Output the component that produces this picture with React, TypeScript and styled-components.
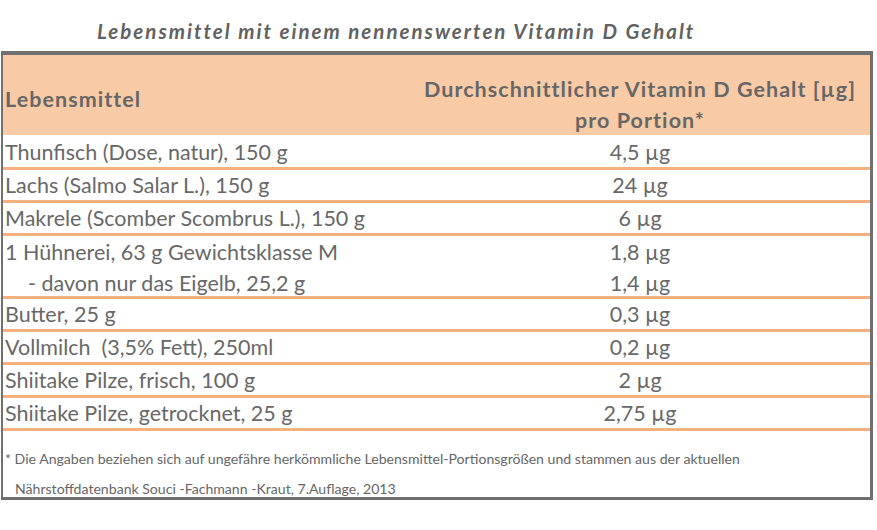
import React from "react";
import styled, { createGlobalStyle } from "styled-components";

const Global = createGlobalStyle`
  html, body { margin: 0; padding: 0; background: #ffffff; }
  body { font-family: Lato, "Open Sans", sans-serif; color: #686868; }
`;

const Page = styled.div`
  width: 877px;
  height: 530px;
  display: flex;
  flex-direction: column;
`;

const Title = styled.h1`
  margin: 0;
  height: 51px;
  box-sizing: border-box;
  padding: 19px 0 0 97px;
  font-size: 20.5px;
  line-height: 24px;
  letter-spacing: 2px;
  font-weight: 700;
  font-style: italic;
  color: #626262;
  white-space: nowrap;
`;

const Frame = styled.div`
  margin-left: 1px;
  width: 872px;
  box-sizing: border-box;
  border-top: 4px solid #707070;
  border-left: 2px solid #707070;
  border-right: 3px solid #707070;
  border-bottom: 3px solid #707070;
  display: flex;
  flex-direction: column;
`;

const Header = styled.div`
  height: 80px;
  background: #f8cba6;
  display: grid;
  grid-template-columns: 407px 1fr;
`;

const HeadCell = styled.div<{ $center?: boolean; $padTop: number }>`
  font-size: 21.5px;
  font-weight: 700;
  letter-spacing: 1.05px;
  color: #666666;
  box-sizing: border-box;
  padding-top: ${(p) => p.$padTop}px;
  padding-left: ${(p) => (p.$center ? 0 : 2)}px;
  text-align: ${(p) => (p.$center ? "center" : "left")};
  line-height: 31px;
  white-space: nowrap;
`;

const Row = styled.div<{ $h: number; $divider: boolean }>`
  display: grid;
  grid-template-columns: 407px 1fr;
  height: ${(p) => p.$h}px;
  border-bottom: ${(p) => (p.$divider ? "3px solid #f6b07e" : "none")};
  font-size: 21.5px;
  line-height: 24px;
  color: #686868;
`;

const Cell = styled.div<{ $center?: boolean; $indent?: number; $pb: number }>`
  display: flex;
  align-items: flex-end;
  justify-content: ${(p) => (p.$center ? "center" : "flex-start")};
  padding-left: ${(p) => (p.$center ? 0 : 2 + (p.$indent ?? 0))}px;
  padding-bottom: ${(p) => p.$pb}px;
  white-space: pre;
`;

const Footnote = styled.div`
  height: 66px;
  box-sizing: border-box;
  padding: 13px 0 0 2px;
  font-size: 14.1px;
  line-height: 30px;
  color: #666666;
  white-space: pre;
`;

const FootLine = styled.div<{ $indent?: number }>`
  padding-left: ${(p) => p.$indent ?? 0}px;
`;

type Item = { name: string; value: string; h: number; divider: boolean; indent?: number; pb: number };

const items: Item[] = [
  { name: "Thunfisch (Dose, natur), 150 g", value: "4,5 µg", h: 32, divider: true, pb: 3 },
  { name: "Lachs (Salmo Salar L.), 150 g", value: "24 µg", h: 30, divider: true, pb: 3 },
  { name: "Makrele (Scomber Scombrus L.), 150 g", value: "6 µg", h: 30, divider: true, pb: 3 },
  { name: "1 Hühnerei, 63 g Gewichtsklasse M", value: "1,8 µg", h: 30, divider: false, pb: 2 },
  { name: "- davon nur das Eigelb, 25,2 g", value: "1,4 µg", h: 30, divider: true, indent: 23, pb: 1 },
  { name: "Butter, 25 g", value: "0,3 µg", h: 30, divider: true, pb: 3 },
  { name: "Vollmilch  (3,5% Fett), 250ml", value: "0,2 µg", h: 30, divider: true, pb: 3 },
  { name: "Shiitake Pilze, frisch, 100 g", value: "2 µg", h: 30, divider: true, pb: 3 },
  { name: "Shiitake Pilze, getrocknet, 25 g", value: "2,75 µg", h: 30, divider: true, pb: 3 },
];

export default function App() {
  return (
    <Page>
      <Global />
      <Title>Lebensmittel mit einem nennenswerten Vitamin D Gehalt</Title>
      <Frame>
        <Header>
          <HeadCell $padTop={29}>Lebensmittel</HeadCell>
          <HeadCell $center $padTop={19}>
            Durchschnittlicher Vitamin D Gehalt [µg]
            <br />
            pro Portion*
          </HeadCell>
        </Header>
        {items.map((it) => (
          <Row key={it.name} $h={it.h} $divider={it.divider}>
            <Cell $indent={it.indent} $pb={it.pb}>{it.name}</Cell>
            <Cell $center $pb={it.pb}>{it.value}</Cell>
          </Row>
        ))}
        <Footnote>
          <FootLine>* Die Angaben beziehen sich auf ungefähre herkömmliche Lebensmittel-Portionsgrößen und stammen aus der aktuellen</FootLine>
          <FootLine $indent={10}>Nährstoffdatenbank Souci -Fachmann -Kraut, 7.Auflage, 2013</FootLine>
        </Footnote>
      </Frame>
    </Page>
  );
}
